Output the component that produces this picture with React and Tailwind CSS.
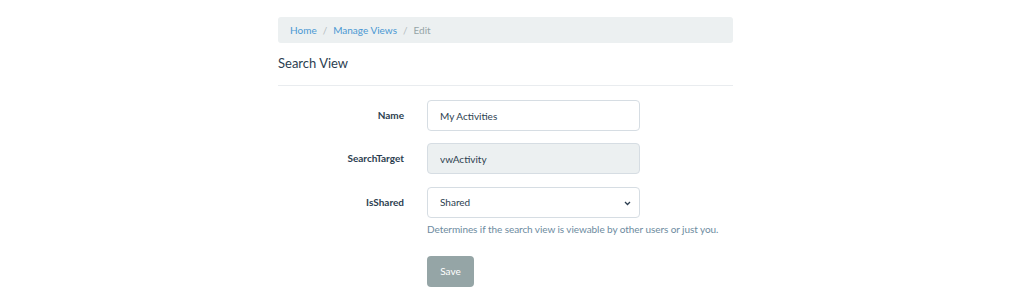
export default function App() {
  return (
    <div className="min-h-screen bg-white font-['Lato',sans-serif] text-[#2c3e50]">
      <div className="w-[455px] ml-[278px] pt-[17px]">
        <nav className="bg-[#ecf0f1] rounded-[3px] h-[26px] px-[12px] flex items-center text-[10px] pt-[1px]">
          <a className="text-[#4a98d3]">Home</a>
          <span className="text-[#b4bcc0] px-[6px]">/</span>
          <a className="text-[#4a98d3]">Manage Views</a>
          <span className="text-[#b4bcc0] px-[6px]">/</span>
          <span className="text-[#95a5a6]">Edit</span>
        </nav>
        <h1 className="text-[13px] mt-[9px] leading-[22px]">Search View</h1>
        <hr className="border-[#e9ecef] mt-[11px]" />

        <form className="mt-[14px] text-[10px]">
          <div className="flex items-center">
            <label className="w-[126px] shrink-0 text-right font-bold">Name</label>
            <input
              defaultValue="My Activities"
              className="ml-[23px] w-[213px] h-[31px] border border-[#d6dde3] rounded-[4px] px-[12px] text-[10px] outline-none"
            />
          </div>
          <div className="flex items-center mt-[12px]">
            <label className="w-[126px] shrink-0 text-right font-bold">SearchTarget</label>
            <input
              readOnly
              defaultValue="vwActivity"
              className="ml-[23px] w-[213px] h-[31px] border border-[#d6dde3] bg-[#ecf0f1] rounded-[4px] px-[12px] text-[10px] outline-none"
            />
          </div>
          <div className="flex mt-[13px]">
            <label className="w-[126px] shrink-0 text-right font-bold leading-[31px]">IsShared</label>
            <div className="ml-[23px]">
              <div className="relative w-[213px] h-[31px] border border-[#d6dde3] rounded-[4px] flex items-center px-[12px]">
                <span>Shared</span>
                <svg className="absolute right-[8px] top-[13px]" width="7" height="5" viewBox="0 0 7 5">
                  <path d="M1 1l2.5 2.5L6 1" fill="none" stroke="#2c3e50" strokeWidth="1.3" />
                </svg>
              </div>
              <p className="text-[#6d8ba0] mt-[4px] whitespace-nowrap tracking-[-0.07px]">Determines if the search view is viewable by other users or just you.</p>
              <button type="button" className="mt-[19px] w-[47px] h-[31px] rounded-[4px] bg-[#95a5a6] text-white">Save</button>
            </div>
          </div>
        </form>
      </div>
    </div>
  )
}
